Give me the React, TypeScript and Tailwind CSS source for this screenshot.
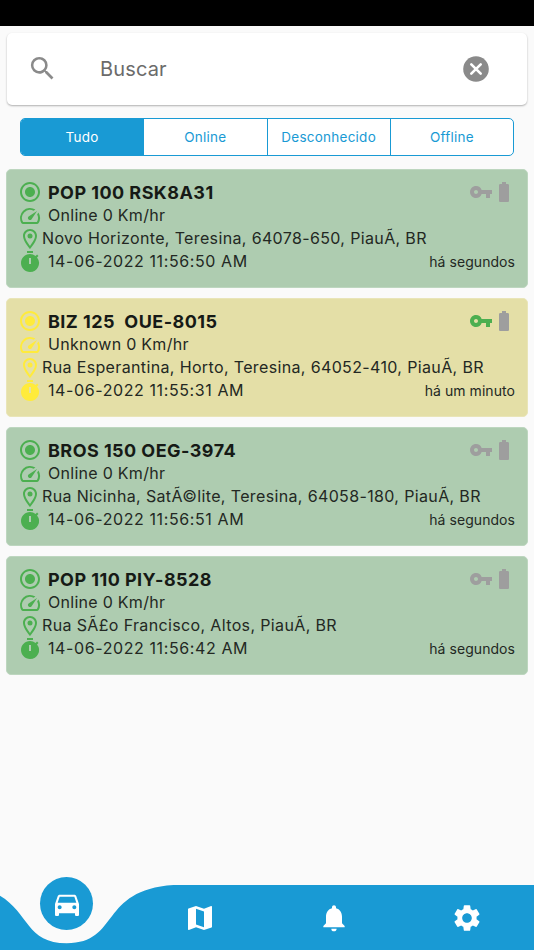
import clsx from "clsx";
import { MdBatteryFull, MdDirectionsCar, MdMap, MdNotifications, MdOutlineLocationOn, MdRadioButtonChecked, MdSearch, MdSettings, MdSpeed, MdVpnKey } from "react-icons/md";

type Status = "online" | "unknown";

type Vehicle = {
  name: string;
  status: Status;
  state: string;
  address: string;
  date: string;
  ago: string;
  ignition: boolean;
};

const vehicles: Vehicle[] = [
  { name: "POP 100 RSK8A31", status: "online", state: "Online 0 Km/hr", address: "Novo Horizonte, Teresina, 64078-650, PiauÃ, BR", date: "14-06-2022 11:56:50 AM", ago: "há segundos", ignition: false },
  { name: "BIZ 125  OUE-8015", status: "unknown", state: "Unknown 0 Km/hr", address: "Rua Esperantina, Horto, Teresina, 64052-410, PiauÃ, BR", date: "14-06-2022 11:55:31 AM", ago: "há um minuto", ignition: true },
  { name: "BROS 150 OEG-3974", status: "online", state: "Online 0 Km/hr", address: "Rua Nicinha, SatÃ©lite, Teresina, 64058-180, PiauÃ, BR", date: "14-06-2022 11:56:51 AM", ago: "há segundos", ignition: false },
  { name: "POP 110 PIY-8528", status: "online", state: "Online 0 Km/hr", address: "Rua SÃ£o Francisco, Altos, PiauÃ, BR", date: "14-06-2022 11:56:42 AM", ago: "há segundos", ignition: false }
];

const tabs = ["Tudo", "Online", "Desconhecido", "Offline"];

function ClearIcon() {
  return (
    <svg className="size-[26px]" viewBox="0 0 26 26" fill="none">
      <circle cx="13" cy="13" r="12.8" fill="#8a8a8a" />
      <path d="M8.3 8.3l9.4 9.4M17.7 8.3l-9.4 9.4" stroke="#fff" strokeWidth="2.6" strokeLinecap="round" />
    </svg>
  );
}

function StopwatchIcon() {
  return (
    <svg className="size-6 shrink-0" viewBox="0 0 24 24" fill="currentColor">
      <path fillRule="evenodd" d="M15 1H9v2h6V1zm-4 13h2V8h-2v6zm8.03-6.61l1.42-1.42c-.43-.51-.9-.99-1.41-1.41l-1.42 1.42A8.962 8.962 0 0 0 12 4c-4.97 0-9 4.03-9 9s4.02 9 9 9a8.994 8.994 0 0 0 7.03-14.61z" />
    </svg>
  );
}

function VehicleCard({ vehicle }: { vehicle: Vehicle }) {
  const online = vehicle.status === "online";
  return (
    <article className={clsx("h-[119px] rounded-[5px] border pl-[11px] pr-[12px] pt-[11px]", online ? "border-[#bdd6bf] bg-[#aeccb0]" : "border-[#e9e5b8] bg-[#e4dfa7]")}>
      <div className={clsx("text-base leading-[23px]", online ? "text-[#4caf50]" : "text-[#ffeb3b]")}>
        <div className="flex h-[23px] items-center">
          <MdRadioButtonChecked className="mb-px size-6 shrink-0" />
          <h2 className="ml-[6px] flex-1 whitespace-pre text-[18px] font-bold tracking-[0.45px] text-[#161a16]">{vehicle.name}</h2>
          <MdVpnKey className={clsx("mb-px size-6", vehicle.ignition ? "text-[#4caf50]" : "text-[#9e9e9e]")} />
          <MdBatteryFull className="-ml-px -mr-px mb-px size-6 text-[#9e9e9e]" />
        </div>
        <div className="flex h-[23px] items-center">
          <MdSpeed className="size-6 shrink-0" />
          <p className="ml-[6px] tracking-[0.28px] text-[#232823]">{vehicle.state}</p>
        </div>
        <div className="flex h-[23px] items-center">
          <MdOutlineLocationOn className="size-6 shrink-0" />
          <p className="whitespace-nowrap tracking-[0.36px] text-[#232823]">{vehicle.address}</p>
        </div>
        <div className="flex h-[23px] items-center">
          <StopwatchIcon />
          <p className="ml-[6px] flex-1 tracking-[0.6px] text-[#232823]">{vehicle.date}</p>
          <span className="text-sm tracking-[0.06px] text-[#232823]">{vehicle.ago}</span>
        </div>
      </div>
    </article>
  );
}

function BottomNav() {
  return (
    <nav className="relative h-[65px] text-white">
      <svg className="absolute inset-0 h-full w-full" viewBox="0 0 534 65">
        <path d="M-40 0C34.7 4.85 13.35 58.2 66.75 58.2C120.15 58.2 98.8 4.85 173.55 0H534V65H-40Z" fill="#199ad4" />
      </svg>
      <div className="relative grid h-full grid-cols-4 grid-rows-[65px] items-center justify-items-center">
        <span className="mb-7 grid size-[53px] place-items-center rounded-full bg-[#199ad4]">
          <MdDirectionsCar className="size-8" />
        </span>
        <MdMap className="size-8" />
        <MdNotifications className="size-8" />
        <MdSettings className="size-8" />
      </div>
    </nav>
  );
}

export default function App() {
  return (
    <div className="flex h-[950px] w-[534px] flex-col overflow-hidden bg-[#fafafa] font-['Inter',sans-serif]">
      <div className="h-[26px] shrink-0 bg-black" />
      <div className="mx-[7px] mt-[7px] flex h-[72px] shrink-0 items-center rounded-[5px] bg-white pl-5 pr-[38px] shadow-[0_1px_2px_rgba(0,0,0,0.3)]">
        <MdSearch className="mb-px size-[31px] text-[#8a8a8a]" />
        <span className="ml-[42px] flex-1 text-[20px] tracking-[0.15px] text-[#6b6b6b]">Buscar</span>
        <ClearIcon />
      </div>
      <div className="ml-5 mr-[20px] mt-[13px] flex h-[38px] shrink-0 divide-x divide-[#199ad4] overflow-hidden rounded-[5px] border border-[#199ad4] bg-white text-[13.5px]">
        {tabs.map((tab, index) => (
          <button className={clsx("flex-1 basis-0 tracking-[0.25px]", index === 0 ? "bg-[#199ad4] text-white" : "text-[#199ad4]")} key={tab}>
            {tab}
          </button>
        ))}
      </div>
      <main className="mx-[6px] mt-[13px] flex-1 space-y-[10px]">
        {vehicles.map((vehicle) => (
          <VehicleCard key={vehicle.name} vehicle={vehicle} />
        ))}
      </main>
      <BottomNav />
    </div>
  );
}
